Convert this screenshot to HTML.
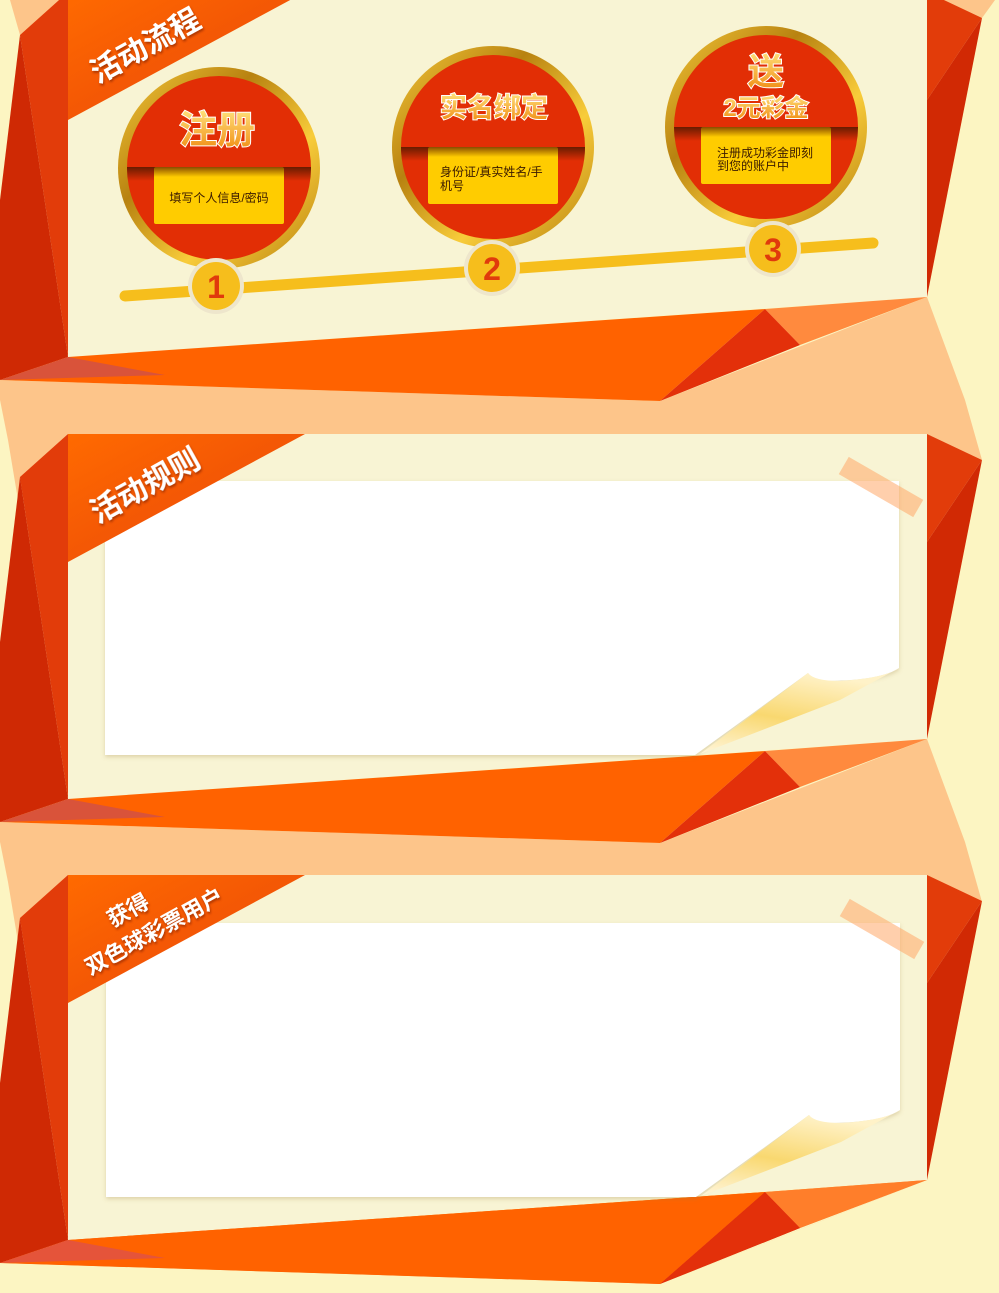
<!DOCTYPE html>
<html><head><meta charset="utf-8"><style>
html,body{margin:0;padding:0;background:#fcf5c2;overflow:hidden;width:999px;height:1293px}
svg{display:block}
</style></head><body>
<svg width="999" height="1293" viewBox="0 0 999 1293" xmlns="http://www.w3.org/2000/svg" font-family="'Liberation Sans','Noto Sans CJK SC',sans-serif">
<defs>
<linearGradient id="ban" x1="0" y1="0" x2="1" y2="1"><stop offset="0" stop-color="#ff6a00"/><stop offset="1" stop-color="#e8440a"/></linearGradient>
<linearGradient id="ring" x1="0" y1="0" x2="1" y2="1"><stop offset="0" stop-color="#f6c93a"/><stop offset="0.35" stop-color="#b88210"/><stop offset="0.65" stop-color="#f8cc3a"/><stop offset="1" stop-color="#b8800e"/></linearGradient>
<linearGradient id="ttl" x1="0" y1="0" x2="0" y2="1"><stop offset="0" stop-color="#ffe07a"/><stop offset="1" stop-color="#f08a10"/></linearGradient>
<linearGradient id="shd" x1="0" y1="0" x2="0" y2="1"><stop offset="0" stop-color="#5a1a00" stop-opacity="0.9"/><stop offset="1" stop-color="#5a1a00" stop-opacity="0"/></linearGradient>
<linearGradient id="curl" x1="0" y1="1" x2="0.4" y2="0"><stop offset="0" stop-color="#fff6dc"/><stop offset="0.5" stop-color="#f9d870"/><stop offset="1" stop-color="#fff2c8"/></linearGradient>
<filter id="ds" x="-5%" y="-5%" width="110%" height="115%"><feDropShadow dx="0" dy="2" stdDeviation="2" flood-color="#a08040" flood-opacity="0.3"/></filter>
<filter id="ts" x="-10%" y="-10%" width="130%" height="130%"><feDropShadow dx="1" dy="2" stdDeviation="1" flood-color="#7a2000" flood-opacity="0.6"/></filter>
<g id="sec">
  <polygon points="927,297 965,400 982,460 927,434 68,434 18,500 8,440 0,400 0,380 660,401" fill="#fdc58a"/>
  <polygon points="68,-8 927,-8 927,297 68,357" fill="#f8f4d4"/>
  <polygon points="68,-8 20,35 68,357" fill="#e23c0a"/>
  <polygon points="20,35 68,357 0,380 0,200" fill="#cf2904"/>
  <polygon points="927,-8 982,18 927,100" fill="#e23c0a"/>
  <polygon points="982,18 927,297 927,100" fill="#d12904"/>
  <polygon points="68,357 765,309 660,401 0,380" fill="#ff6200"/>
  <polygon points="0,380 68,357 165,375" fill="#d9533a"/>
  <polygon points="765,309 927,297 800,345" fill="#ff8a3e"/>
  <polygon points="765,309 800,345 660,401" fill="#e3300a"/>
</g>
<polygon id="banner" points="68,-8 305,-8 68,120" fill="url(#ban)"/>
<g id="paper">
  <path d="M105,481 H899 V668 Q880,681 822,681 Q812,679 808,673 L695,755 H105 Z" fill="#fff" filter="url(#ds)"/>
  <path d="M808,673 Q814,681 840,681 Q885,678 899,668 L840,700 L700,754 Z" fill="url(#curl)"/>
  <rect x="838" y="477" width="86" height="20" fill="#ffa868" opacity="0.55" transform="rotate(30 881 487)"/>
</g>
</defs>

<polygon points="10,0 60,0 20,35" fill="#fdc58a"/>
<polygon points="927,0 995,0 982,18" fill="#fdc58a"/>
<use href="#sec"/>
<use href="#sec" transform="translate(0,442)"/>
<use href="#sec" transform="translate(0,883)"/>
<polygon points="0,1263 660,1284 927,1180 999,1180 999,1293 0,1293" fill="#fcf5c2"/>
<g transform="translate(0,883)">
  <polygon points="68,357 765,309 660,401 0,380" fill="#ff6200"/>
  <polygon points="0,380 68,357 165,375" fill="#e5543a"/>
  <polygon points="765,309 927,297 800,345" fill="#ff7e2a"/>
  <polygon points="765,309 800,345 660,401" fill="#e3300a"/>
</g>

<use href="#paper"/>
<use href="#paper" transform="translate(1,442)"/>

<use href="#banner"/>
<use href="#banner" transform="translate(0,442)"/>
<use href="#banner" transform="translate(0,883)"/>

<g fill="#fff" font-weight="bold" filter="url(#ts)">
  <text x="145" y="56" font-size="30" text-anchor="middle" transform="rotate(-29 145 45)">活动流程</text>
  <text x="145" y="496" font-size="30" text-anchor="middle" transform="rotate(-29 145 485)">活动规则</text>
  <text x="128" y="918" font-size="22" text-anchor="middle" transform="rotate(-29 128 910)">获得</text>
  <text x="154" y="939" font-size="22" text-anchor="middle" transform="rotate(-29 154 931)">双色球彩票用户</text>
</g>

<line x1="125" y1="296" x2="873" y2="243" stroke="#f6be1c" stroke-width="11" stroke-linecap="round"/>

<g>
  <circle cx="219" cy="168" r="101" fill="url(#ring)"/>
  <circle cx="219" cy="168" r="92" fill="#e22e05"/>
  <clipPath id="c1"><circle cx="219" cy="168" r="92"/></clipPath>
  <rect x="120" y="167" width="200" height="14" fill="url(#shd)" clip-path="url(#c1)"/>
  <rect x="154" y="167" width="130" height="57" rx="2" fill="#ffcc00"/>
  <rect x="154" y="167" width="130" height="10" fill="url(#shd)" opacity="0.8"/>
  <text x="219" y="202" font-size="12" text-anchor="middle" fill="#3a1a00">填写个人信息/密码</text>
  <text x="217" y="143" font-size="38" font-weight="bold" text-anchor="middle" fill="url(#ttl)" stroke="#fff" stroke-width="2" paint-order="stroke">注册</text>
</g>
<g>
  <circle cx="493" cy="147" r="101" fill="url(#ring)"/>
  <circle cx="493" cy="147" r="92" fill="#e22e05"/>
  <clipPath id="c2"><circle cx="493" cy="147" r="92"/></clipPath>
  <rect x="395" y="147" width="200" height="14" fill="url(#shd)" clip-path="url(#c2)"/>
  <rect x="428" y="147" width="130" height="57" rx="2" fill="#ffcc00"/>
  <rect x="428" y="147" width="130" height="10" fill="url(#shd)" opacity="0.8"/>
  <text x="440" y="176" font-size="12" fill="#3a1a00">身份证/真实姓名/手</text>
  <text x="440" y="190" font-size="12" fill="#3a1a00">机号</text>
  <text x="494" y="117" font-size="27" font-weight="bold" text-anchor="middle" fill="url(#ttl)" stroke="#fff" stroke-width="2" paint-order="stroke">实名绑定</text>
</g>
<g>
  <circle cx="766" cy="127" r="101" fill="url(#ring)"/>
  <circle cx="766" cy="127" r="92" fill="#e22e05"/>
  <clipPath id="c3"><circle cx="766" cy="127" r="92"/></clipPath>
  <rect x="668" y="127" width="200" height="14" fill="url(#shd)" clip-path="url(#c3)"/>
  <rect x="701" y="127" width="130" height="57" rx="2" fill="#ffcc00"/>
  <rect x="701" y="127" width="130" height="10" fill="url(#shd)" opacity="0.8"/>
  <text x="717" y="157" font-size="12" fill="#3a1a00">注册成功彩金即刻</text>
  <text x="717" y="170" font-size="12" fill="#3a1a00">到您的账户中</text>
  <text x="766" y="84" font-size="36" font-weight="bold" text-anchor="middle" fill="url(#ttl)" stroke="#fff" stroke-width="2" paint-order="stroke">送</text>
  <text x="766" y="116" font-size="24" font-weight="bold" text-anchor="middle" fill="url(#ttl)" stroke="#fff" stroke-width="2" paint-order="stroke">2元彩金</text>
</g>

<g font-weight="bold" font-size="32" text-anchor="middle" fill="#e03a0c">
  <circle cx="216" cy="286" r="28" fill="#eee6cc"/><circle cx="216" cy="286" r="24" fill="#f6be1c"/>
  <text x="216" y="298">1</text>
  <circle cx="492" cy="268" r="28" fill="#eee6cc"/><circle cx="492" cy="268" r="24" fill="#f6be1c"/>
  <text x="492" y="280">2</text>
  <circle cx="773" cy="249" r="28" fill="#eee6cc"/><circle cx="773" cy="249" r="24" fill="#f6be1c"/>
  <text x="773" y="261">3</text>
</g>
</svg>
</body></html>
